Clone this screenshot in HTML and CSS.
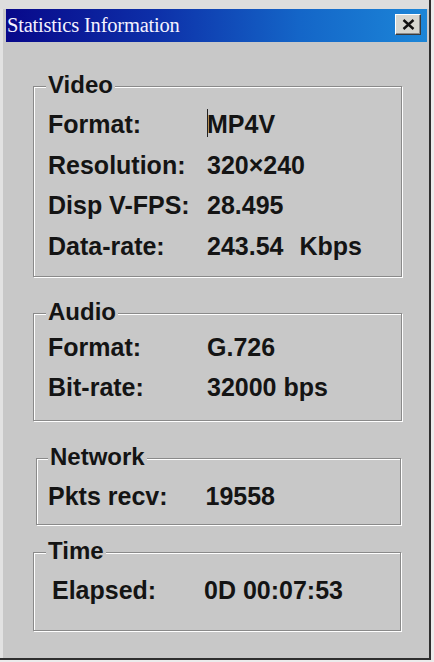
FILE: index.html
```html
<!DOCTYPE html>
<html>
<head>
<meta charset="utf-8">
<title>Statistics Information</title>
<link rel="stylesheet" href="styles.css">
</head>
<body>
<div class="window">
  <div class="titlebar">
    <span class="title">Statistics Information</span>
    <button class="close" aria-label="Close">
      <svg width="13" height="11" viewBox="0 0 13 11"><path d="M1.5 1 L11.5 10 M11.5 1 L1.5 10" stroke="#111" stroke-width="2.4" fill="none"/></svg>
    </button>
  </div>

  <section class="group group-video">
    <span class="legend">Video</span>
    <div class="rows">
      <span class="lbl">Format:</span><span class="val val-cursor"><i class="cursor"></i>MP4V</span>
      <span class="lbl">Resolution:</span><span class="val">320×240</span>
      <span class="lbl">Disp V-FPS:</span><span class="val">28.495</span>
      <span class="lbl">Data-rate:</span><span class="val">243.54&nbsp;<span class="unit">Kbps</span></span>
    </div>
  </section>

  <section class="group group-audio">
    <span class="legend">Audio</span>
    <div class="rows">
      <span class="lbl">Format:</span><span class="val">G.726</span>
      <span class="lbl">Bit-rate:</span><span class="val">32000 bps</span>
    </div>
  </section>

  <section class="group group-network">
    <span class="legend">Network</span>
    <div class="rows">
      <span class="lbl">Pkts recv:</span><span class="val">19558</span>
    </div>
  </section>

  <section class="group group-time">
    <span class="legend">Time</span>
    <div class="rows">
      <span class="lbl">Elapsed:</span><span class="val">0D 00:07:53</span>
    </div>
  </section>
</div>
</body>
</html>
```

FILE: styles.css
```css
html, body {
  margin: 0;
  padding: 0;
  background: #ececec;
}

.window {
  box-sizing: border-box;
  width: 431px;
  height: 660px;
  background: #c8c8c8;
  border-right: 2px solid #2e2e2e;
  border-bottom: 2px solid #2e2e2e;
  padding: 9px 2px 0 6px;
  box-shadow: inset 0 9px 0 #dddddd, inset 3px 0 0 #e2e2e2;
  display: flex;
  flex-direction: column;
  align-items: flex-start;
}

.titlebar {
  align-self: stretch;
  height: 33px;
  display: flex;
  align-items: center;
  justify-content: space-between;
  background: linear-gradient(to right, #08088a 0%, #0d2fa8 35%, #1466c8 70%, #1c86d8 100%);
  padding: 0 6px 0 1px;
}

.title {
  font-family: "Liberation Serif", "Times New Roman", serif;
  font-size: 20.5px;
  line-height: 33px;
  color: #f4f2ff;
  letter-spacing: -0.2px;
}

.close {
  box-sizing: border-box;
  width: 26px;
  height: 21px;
  margin: -2px 0 0 0;
  padding: 0;
  display: flex;
  align-items: center;
  justify-content: center;
  background: #d6d6d0;
  border: 1px solid;
  border-color: #ffffff #3a3a3a #3a3a3a #ffffff;
  box-shadow: inset -1px -1px 0 #8c8c8c;
}

.close svg {
  display: block;
}

.group {
  position: relative;
  box-sizing: border-box;
  width: 369px;
  margin-left: 27px;
  border: 1px solid #8a8a8a;
  box-shadow: 1px 1px 0 #ffffff, inset 1px 1px 0 #ffffff;
  font-family: "Liberation Sans", Arial, sans-serif;
  font-weight: bold;
  color: #141414;
}

.legend {
  position: absolute;
  top: -14px;
  left: 12px;
  padding: 0 2px;
  background: #c8c8c8;
  font-size: 24px;
  line-height: 24px;
}

.rows {
  display: grid;
  grid-template-columns: 159px auto;
  font-size: 25px;
  line-height: 40.5px;
  white-space: nowrap;
}

.val {
  position: relative;
}

.unit {
  margin-left: 9px;
}

.cursor {
  position: absolute;
  left: 0px;
  top: 5px;
  width: 1px;
  height: 28px;
  background: #222;
}

.group-video {
  margin-top: 44px;
  padding: 17px 0 10px 14px;
}

.group-audio {
  margin-top: 36px;
  padding: 14px 0 13px 14px;
}
.group-audio .rows {
  line-height: 39.5px;
}

.group-network {
  margin-top: 37px;
  margin-left: 30px;
  width: 365px;
  padding: 17px 0 8px 11px;
}
.group-network .legend {
  left: 11px;
}
.group-network .rows {
  line-height: 40px;
  grid-template-columns: 157.5px auto;
}

.group-time {
  margin-top: 27px;
  width: 368px;
  padding: 17px 0 20px 18px;
}
.group-time .rows {
  line-height: 40px;
  grid-template-columns: 152px auto;
}
```
